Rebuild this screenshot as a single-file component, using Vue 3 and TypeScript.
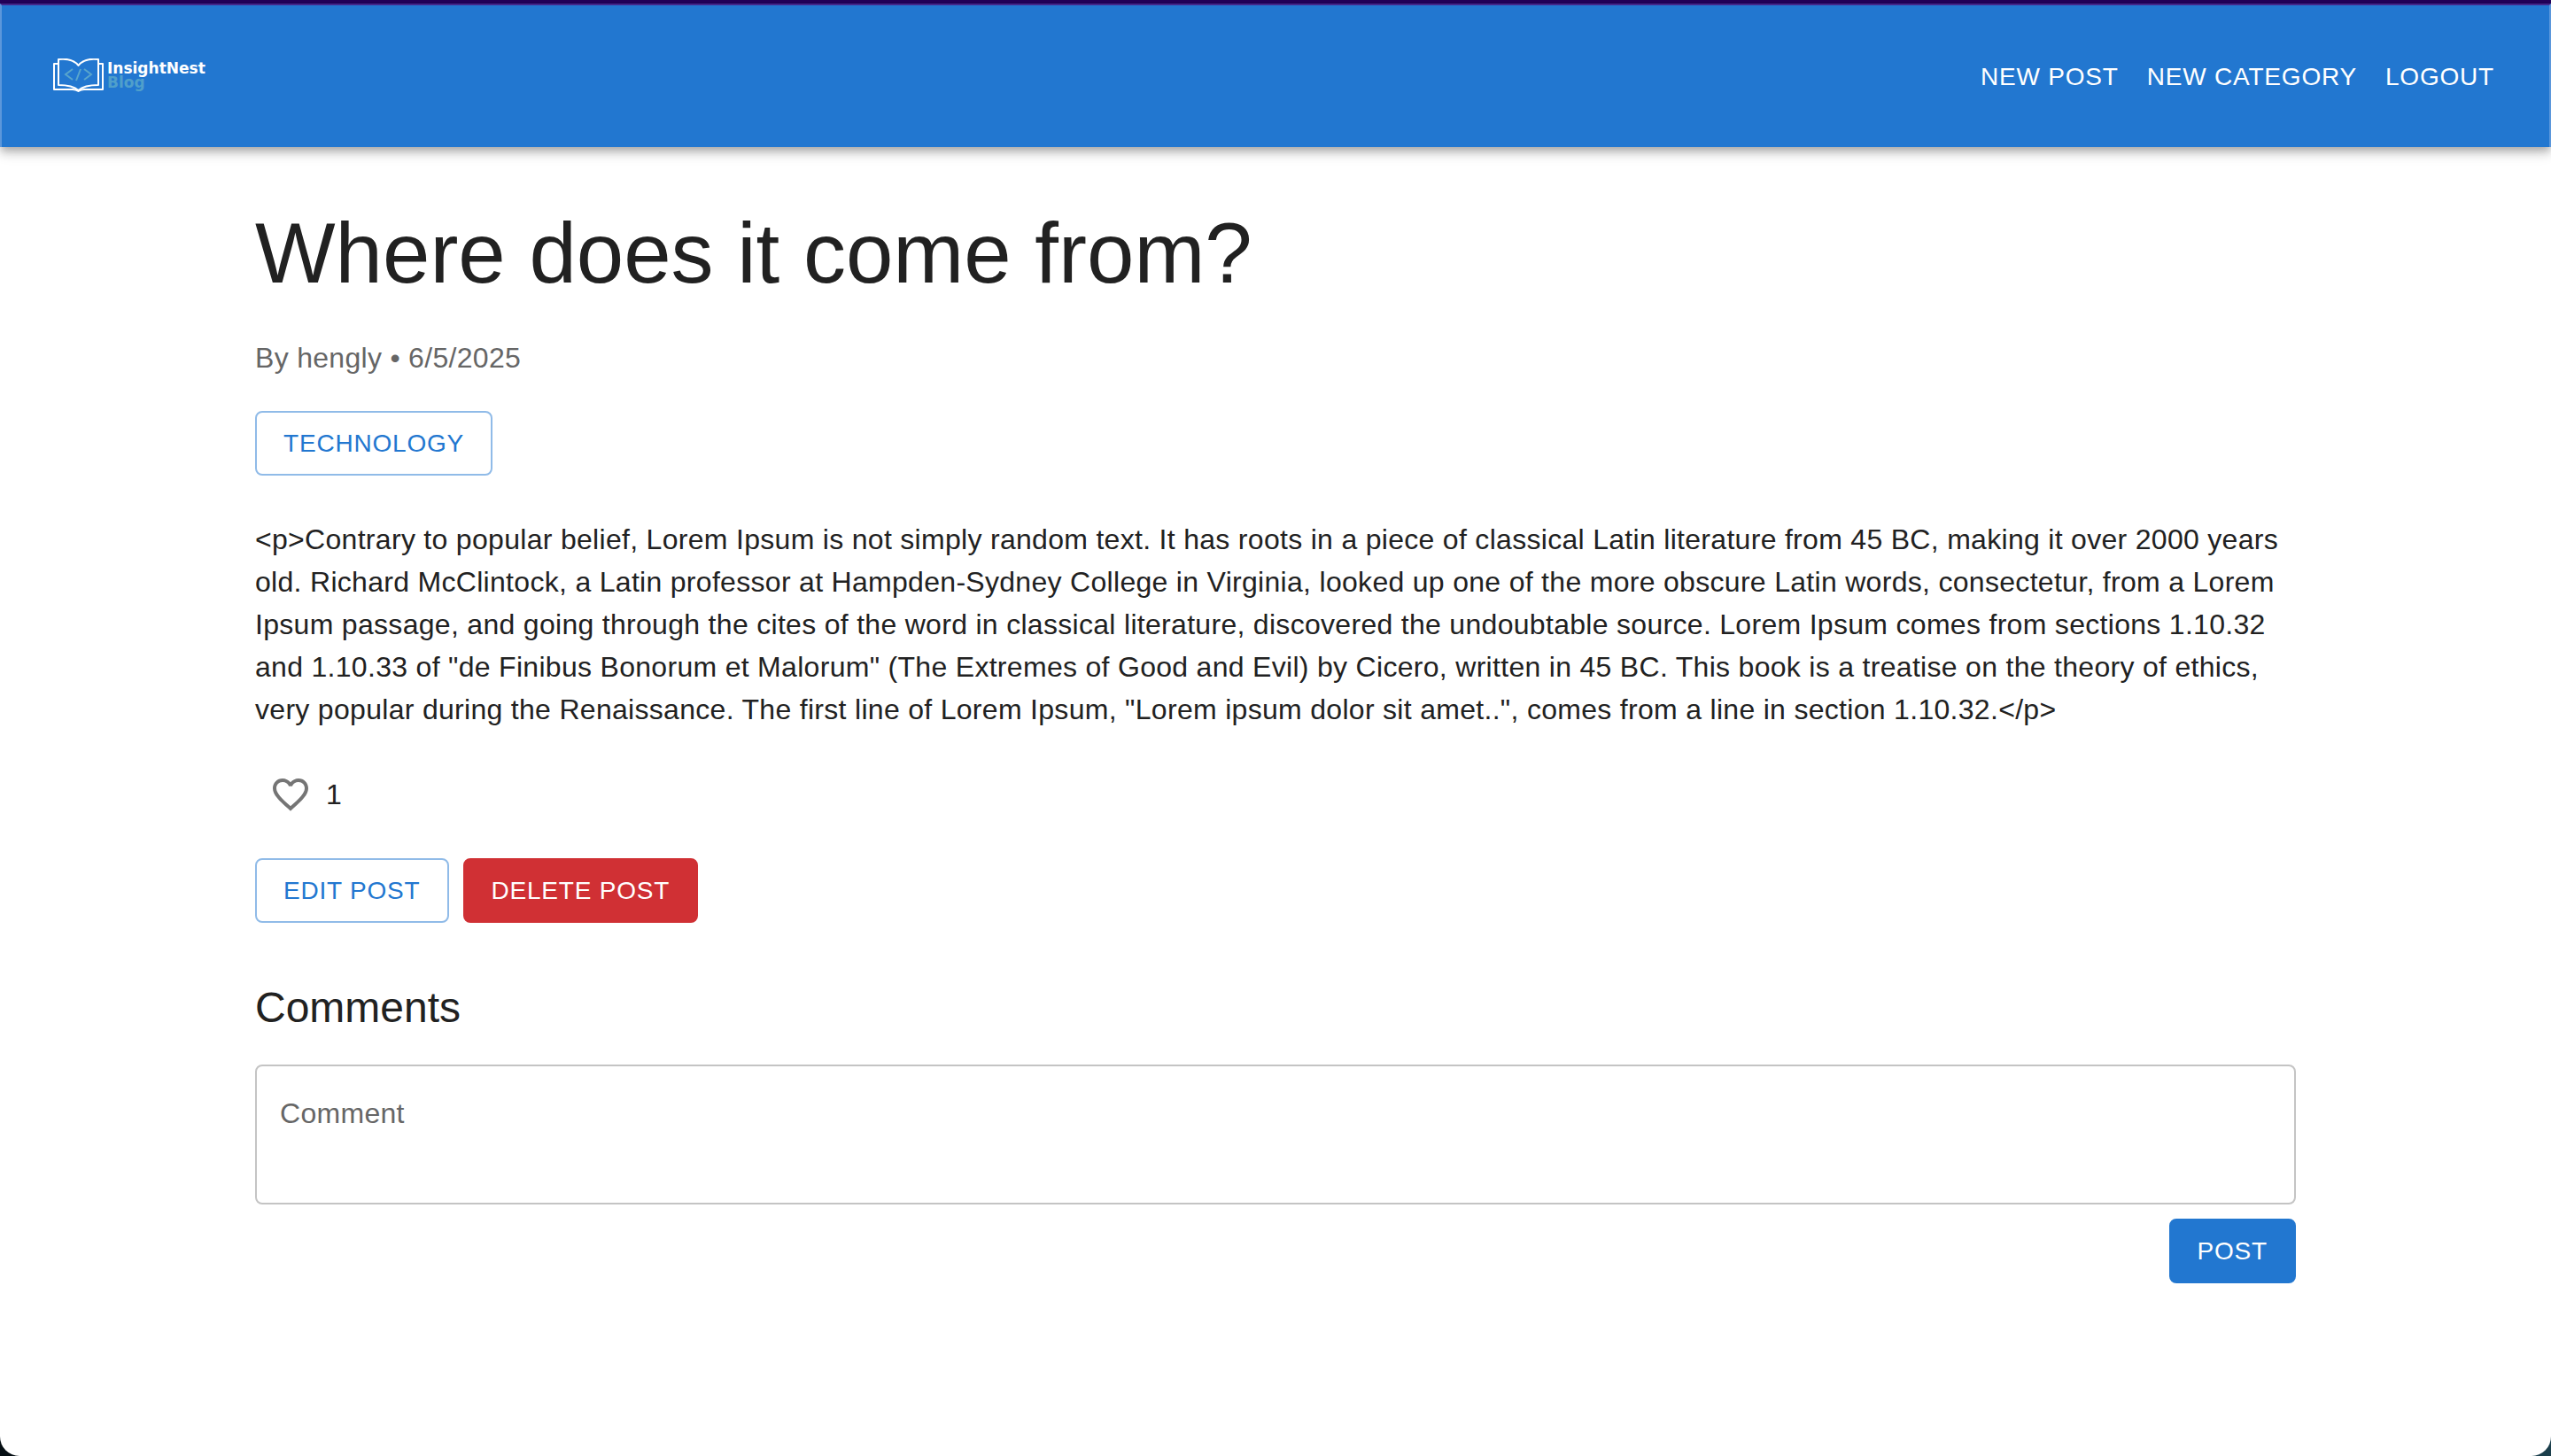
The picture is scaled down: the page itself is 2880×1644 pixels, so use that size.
<script setup lang="ts">
import { computed, ref } from 'vue'

interface NavItem {
  label: string
  href: string
}

const navItems: NavItem[] = [
  { label: 'New Post', href: '#new-post' },
  { label: 'New Category', href: '#new-category' },
  { label: 'Logout', href: '#logout' },
]

const post = {
  title: 'Where does it come from?',
  author: 'hengly',
  date: '6/5/2025',
  category: 'Technology',
  content:
    '<p>Contrary to popular belief, Lorem Ipsum is not simply random text. It has roots in a piece of classical Latin literature from 45 BC, making it over 2000 years old. Richard McClintock, a Latin professor at Hampden-Sydney College in Virginia, looked up one of the more obscure Latin words, consectetur, from a Lorem Ipsum passage, and going through the cites of the word in classical literature, discovered the undoubtable source. Lorem Ipsum comes from sections 1.10.32 and 1.10.33 of "de Finibus Bonorum et Malorum" (The Extremes of Good and Evil) by Cicero, written in 45 BC. This book is a treatise on the theory of ethics, very popular during the Renaissance. The first line of Lorem Ipsum, "Lorem ipsum dolor sit amet..", comes from a line in section 1.10.32.</p>',
}

const liked = ref(false)
const likes = computed(() => (liked.value ? 2 : 1))
const comment = ref('')
</script>

<template>
  <div class="frame">
    <div class="page">
      <header class="app-bar">
        <a class="logo" href="#home">
          <svg class="logo-mark" viewBox="0 0 57 38" fill="none" aria-hidden="true">
            <g stroke="#ffffff" stroke-width="2" stroke-linejoin="round">
              <path d="M6 6H1V35H22C25 35 27 36 28.500 37C30 36 32 35 35 35H56V6H51" />
              <path d="M6 1C15 0 24 2 28.500 8C33 2 42 0 51 1V30C42 30 34 31 28.500 36C23 31 15 30 6 30Z" />
            </g>
            <path
              d="M22 12L14 18L22 24M35 12L43 18L35 24M31 12L26 25"
              stroke="#58a5cc"
              stroke-width="2"
            />
          </svg>
          <span class="logo-text">
            <span>InsightNest</span>
            <span class="logo-sub">Blog</span>
          </span>
        </a>
        <nav class="nav">
          <a v-for="item in navItems" :key="item.href" class="nav-link" :href="item.href">
            {{ item.label }}
          </a>
        </nav>
      </header>

      <main class="content">
        <h1 class="title">{{ post.title }}</h1>
        <p class="byline">By {{ post.author }} • {{ post.date }}</p>
        <button class="btn outlined" type="button">{{ post.category }}</button>
        <p class="body">{{ post.content }}</p>

        <div class="likes">
          <button class="icon-btn" type="button" aria-label="Like post" @click="liked = !liked">
            <svg viewBox="0 0 24 24" fill="currentColor" aria-hidden="true">
              <path
                d="M16.5 3c-1.740 0-3.410.81-4.500 2.090C10.910 3.810 9.240 3 7.500 3 4.420 3 2 5.420 2 8.500c0 3.780 3.400 6.860 8.550 11.540L12 21.350l1.450-1.320C18.600 15.360 22 12.280 22 8.500 22 5.420 19.580 3 16.500 3m-4.400 15.550-.1.1-.1-.1C7.140 14.240 4 11.390 4 8.500 4 6.500 5.500 5 7.500 5c1.540 0 3.040.99 3.570 2.360h1.870C13.460 5.990 14.960 5 16.500 5c2 0 3.500 1.500 3.500 3.500 0 2.890-3.140 5.740-7.900 10.050"
              />
            </svg>
          </button>
          <span>{{ likes }}</span>
        </div>

        <div class="actions">
          <button class="btn outlined" type="button">Edit Post</button>
          <button class="btn danger" type="button">Delete Post</button>
        </div>

        <h2 class="section-title">Comments</h2>
        <form class="comment-form" @submit.prevent>
          <div class="field">
            <label v-show="!comment" for="comment">Comment</label>
            <textarea id="comment" v-model="comment" rows="2"></textarea>
          </div>
          <button class="btn primary" type="submit">Post</button>
        </form>
      </main>
    </div>
  </div>
</template>

<style>
body {
  margin: 0;
}
</style>

<style scoped>
.frame {
  box-sizing: border-box;
  min-height: 100vh;
  display: flex;
  border-top: 4px solid #23005a;
  background: linear-gradient(to right, #060f14, #1b3f4c);
  color: #212121;
  font-family: "Liberation Sans", Helvetica, Arial, sans-serif;
  font-size: 32px;
  line-height: 48px;
  letter-spacing: 0.00938em;
}

.page {
  flex: 1;
  min-width: 0;
  border-radius: 0 0 22px 22px;
  background: #ffffff;
}

.app-bar {
  display: flex;
  align-items: center;
  justify-content: space-between;
  height: 160px;
  padding: 0 46px 0 58px;
  border: 2px solid #5b97db;
  border-top-color: #43278a;
  border-bottom: 0;
  background: #2277d0;
  box-shadow:
    0 4px 8px -2px rgba(0, 0, 0, 0.2),
    0 8px 10px 0 rgba(0, 0, 0, 0.14),
    0 2px 20px 0 rgba(0, 0, 0, 0.12);
}

.logo {
  display: flex;
  align-items: center;
  gap: 4px;
  padding-bottom: 2px;
  color: #ffffff;
  text-decoration: none;
}

.logo-mark {
  width: 57px;
  height: 38px;
}

.logo-text {
  display: flex;
  flex-direction: column;
  font-family: "DejaVu Sans", Verdana, sans-serif;
  font-size: 17px;
  font-weight: 700;
  line-height: 16px;
  letter-spacing: normal;
}

.logo-sub {
  color: #4f9fcb;
}

.nav {
  display: flex;
}

.nav-link,
.btn {
  font-size: 28px;
  line-height: 49px;
  letter-spacing: 0.02857em;
  text-transform: uppercase;
}

.nav-link {
  padding: 12px 16px;
  color: #ffffff;
  text-decoration: none;
}

.content {
  width: 80%;
  margin: 0 auto;
  padding: 64px 0;
}

.title {
  margin: 0 0 34px;
  font-size: 96px;
  font-weight: 400;
  line-height: 112px;
  letter-spacing: normal;
}

.byline {
  margin: 0 0 32px;
  color: #666666;
  line-height: 56px;
}

.btn {
  display: block;
  padding: 10px 30px;
  height: 73px;
  border: 2px solid transparent;
  border-radius: 8px;
  font-family: inherit;
  color: #ffffff;
  cursor: pointer;
}

.outlined {
  border-color: #90bbe8;
  background: transparent;
  color: #2277d0;
}

.primary {
  border-color: #2277d0;
  background: #2277d0;
}

.danger {
  border-color: #d03034;
  background: #d03034;
}

.body {
  margin: 48px 0 32px;
}

.likes {
  display: flex;
  align-items: center;
}

.icon-btn {
  padding: 16px;
  border: 0;
  background: transparent;
  color: #757575;
  cursor: pointer;
}

.icon-btn svg {
  display: block;
  width: 48px;
  height: 48px;
}

.actions {
  display: flex;
  gap: 16px;
  margin-top: 32px;
}

.section-title {
  margin: 64px 0 32px;
  font-size: 48px;
  font-weight: 400;
  line-height: 64px;
  letter-spacing: normal;
}

.comment-form {
  display: flex;
  flex-direction: column;
  align-items: flex-end;
  gap: 16px;
}

.field {
  box-sizing: border-box;
  display: grid;
  width: 100%;
  padding: 31px 26px;
  border: 2px solid #c4c4c4;
  border-radius: 8px;
  line-height: 44px;
}

.field label,
.field textarea {
  grid-area: 1 / 1;
}

.field label {
  color: #666666;
  pointer-events: none;
}

.field textarea {
  height: 92px;
  padding: 0;
  border: 0;
  outline: 0;
  resize: none;
  background: transparent;
  color: inherit;
  font: inherit;
  letter-spacing: inherit;
}
</style>
